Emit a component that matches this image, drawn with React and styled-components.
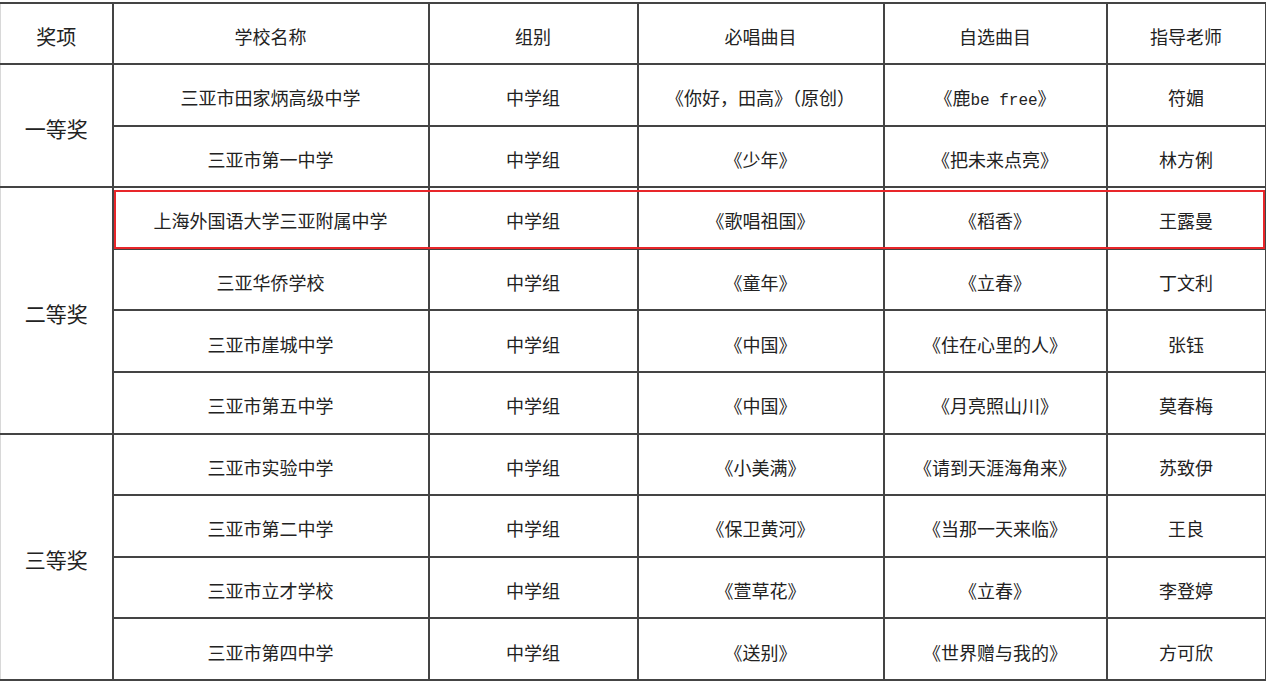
import React from "react"
import styled, { createGlobalStyle, css } from "styled-components"

const GlobalStyle = createGlobalStyle`
*{
  margin:0;
  padding:0;
  box-sizing:border-box;
}
body{
  background:#fff;
  color:#222;
  font-family:"Noto Sans CJK SC","Noto Sans",sans-serif;
}
`

const Page = styled.div`
width:1266px;
height:681px;
padding-top:2px;
overflow:hidden;
background:#fff;
`

const Table = styled.table`
width:1265px;
table-layout:fixed;
border-collapse:collapse;
border-left:1px solid #d8d8d8;
`

const HeadCell = styled.th`
height:61px;
padding-top:5px;
font-weight:400;
font-size:${p => (p.$first ? "20px" : "18px")};
color:#222;
text-align:center;
vertical-align:middle;
border:2px solid #444;
border-left-width:${p => (p.$first ? "0" : "2px")};
${p => p.$dashed && css`border-right:1px dashed #aaa;`}
`

const Cell = styled.td`
position:relative;
height:61.6px;
padding-top:5px;
font-size:${p => (p.$first ? "21px" : "18px")};
color:#222;
text-align:center;
vertical-align:middle;
white-space:nowrap;
border:2px solid #444;
border-left-width:${p => (p.$first ? "0" : "2px")};
${p => p.$dashed && css`border-right:1px dashed #aaa;`}
${p => p.$mark && css`
  &::after{
    content:'';
    position:absolute;
    top:2px;
    bottom:-1px;
    left:${p.$markStart ? "0" : "-2px"};
    right:${p.$markEnd ? "0" : "-2px"};
    border-top:2px solid #e8262a;
    border-bottom:2px solid #e8262a;
    ${p.$markStart && "border-left:2px solid #e8262a;"}
    ${p.$markEnd && "border-right:2px solid #e8262a;"}
    pointer-events:none;
  }
`}
`

const Mono = styled.span`
font-family:"Liberation Mono","DejaVu Sans Mono",monospace;
font-size:16px;
`

const columns = ["奖项", "学校名称", "组别", "必唱曲目", "自选曲目", "指导老师"]
const widths = [112, 316, 209, 246, 223, 159]

const groups = [
  {
    award: "一等奖",
    rows: [
      ["三亚市田家炳高级中学", "中学组", "《你好，田高》（原创）", <>《鹿<Mono>be free</Mono>》</>, "符媚"],
      ["三亚市第一中学", "中学组", "《少年》", "《把未来点亮》", "林方俐"],
    ],
  },
  {
    award: "二等奖",
    rows: [
      ["上海外国语大学三亚附属中学", "中学组", "《歌唱祖国》", "《稻香》", "王露曼", true],
      ["三亚华侨学校", "中学组", "《童年》", "《立春》", "丁文利"],
      ["三亚市崖城中学", "中学组", "《中国》", "《住在心里的人》", "张钰"],
      ["三亚市第五中学", "中学组", "《中国》", "《月亮照山川》", "莫春梅"],
    ],
  },
  {
    award: "三等奖",
    rows: [
      ["三亚市实验中学", "中学组", "《小美满》", "《请到天涯海角来》", "苏致伊"],
      ["三亚市第二中学", "中学组", "《保卫黄河》", "《当那一天来临》", "王良"],
      ["三亚市立才学校", "中学组", "《萱草花》", "《立春》", "李登婷"],
      ["三亚市第四中学", "中学组", "《送别》", "《世界赠与我的》", "方可欣"],
    ],
  },
]

export default function App() {
  return (
    <Page>
      <GlobalStyle />
      <Table>
        <colgroup>
          {widths.map((w, i) => <col key={i} style={{ width: w }} />)}
        </colgroup>
        <thead>
          <tr>
            {columns.map((c, i) => (
              <HeadCell key={c} $first={i === 0} $dashed={i === 3}>{c}</HeadCell>
            ))}
          </tr>
        </thead>
        <tbody>
          {groups.map(g =>
            g.rows.map((r, ri) => {
              const mark = r[5] === true
              const cells = r.slice(0, 5)
              return (
                <tr key={g.award + ri}>
                  {ri === 0 && (
                    <Cell $first rowSpan={g.rows.length}>{g.award}</Cell>
                  )}
                  {cells.map((c, ci) => (
                    <Cell
                      key={ci}
                      $dashed={ci === 2}
                      $mark={mark}
                      $markStart={ci === 0}
                      $markEnd={ci === 4}
                    >
                      {c}
                    </Cell>
                  ))}
                </tr>
              )
            })
          )}
        </tbody>
      </Table>
    </Page>
  )
}
